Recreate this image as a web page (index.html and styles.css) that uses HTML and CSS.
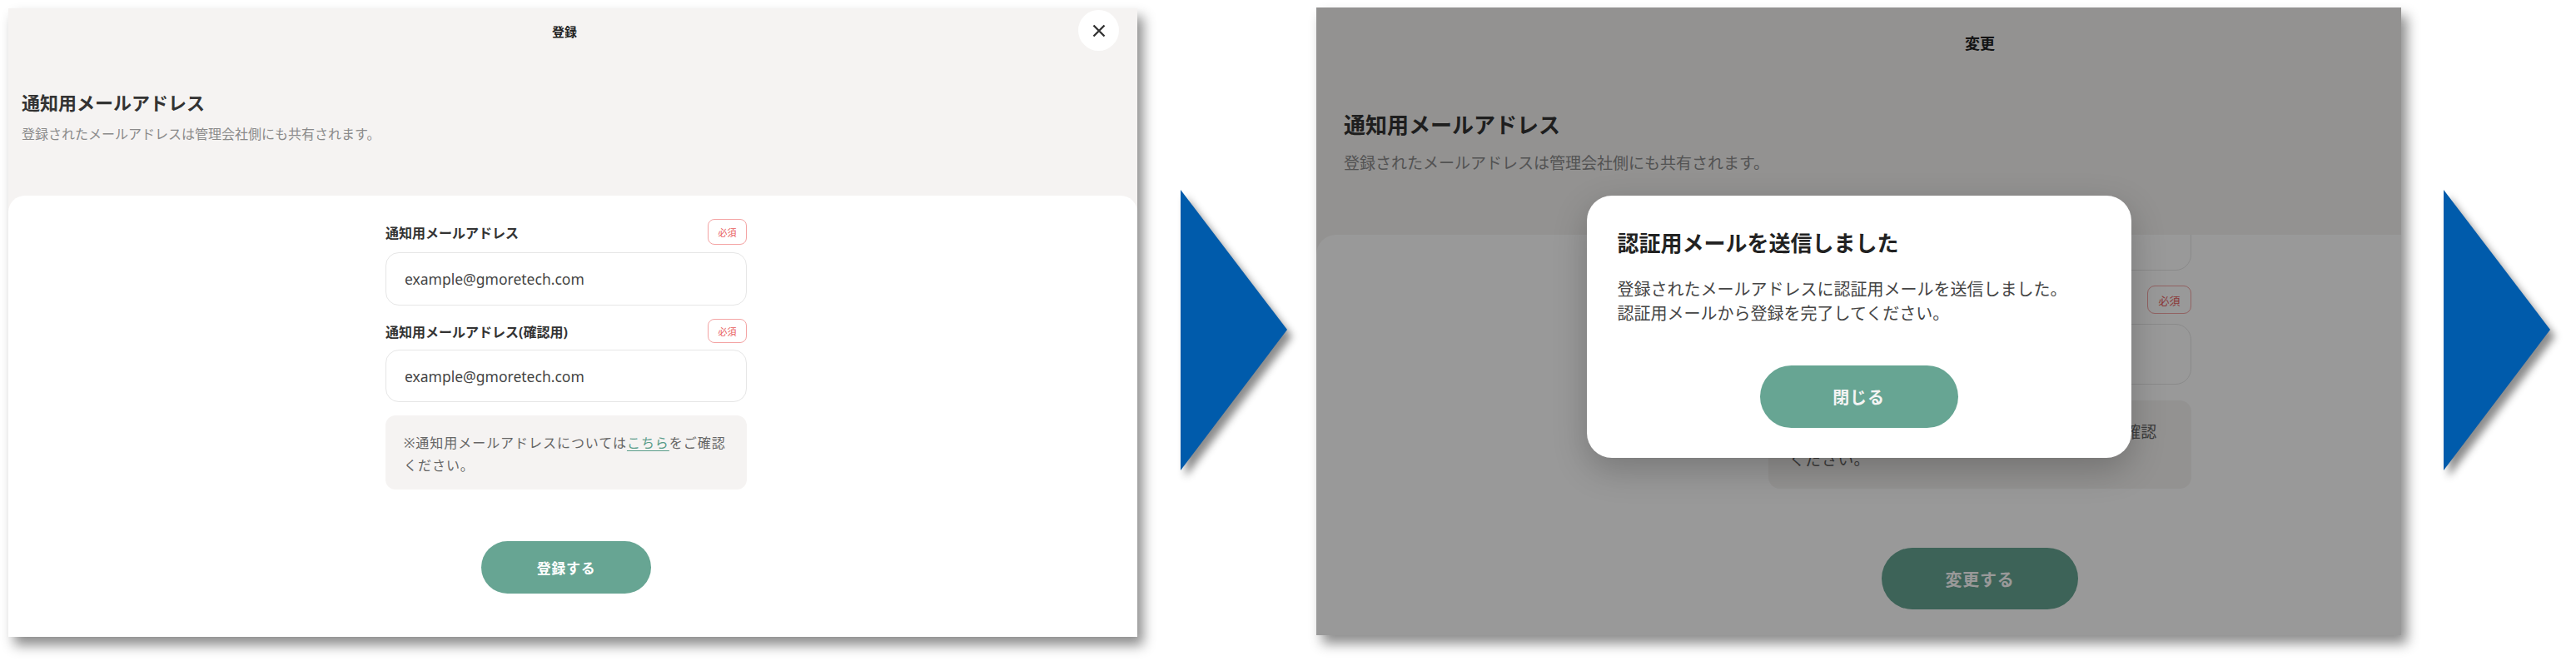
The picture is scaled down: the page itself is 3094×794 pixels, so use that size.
FILE: index.html
```html
<!DOCTYPE html>
<html lang="ja">
<head>
<meta charset="utf-8">
<title>通知用メールアドレス</title>
<link rel="stylesheet" href="styles.css">
</head>
<body>
<div class="stage">

  <!-- Step 1: registration form -->
  <section class="panel panel-a">
    <header class="head">
      <div class="head-title">登録</div>
      <button class="close" type="button" aria-label="閉じる">
        <svg width="18" height="18" viewBox="0 0 18 18"><path d="M2.5 2.5 L15.5 15.5 M15.5 2.5 L2.5 15.5" /></svg>
      </button>
      <h2 class="head-heading">通知用メールアドレス</h2>
      <p class="head-sub">登録されたメールアドレスは管理会社側にも共有されます。</p>
    </header>
    <div class="card">
      <div class="col">
        <div class="field-row"><span class="label">通知用メールアドレス</span><span class="req">必須</span></div>
        <div class="input">example@gmoretech.com</div>
        <div class="field-row row-2"><span class="label">通知用メールアドレス(確認用)</span><span class="req">必須</span></div>
        <div class="input input-2">example@gmoretech.com</div>
        <div class="note">※通知用メールアドレスについては<a href="#">こちら</a>をご確認<br>ください。</div>
        <button class="submit" type="button">登録する</button>
      </div>
    </div>
  </section>

  <svg class="arrow" viewBox="0 0 128 337" width="128" height="337"><polygon points="0,0 128,168 0,337" /></svg>

  <!-- Step 2: change form with confirmation dialog -->
  <section class="panel panel-b">
    <div class="page-b">
      <header class="head-b">
        <div class="head-b-title">変更</div>
        <h2 class="head-b-heading">通知用メールアドレス</h2>
        <p class="head-b-sub">登録されたメールアドレスは管理会社側にも共有されます。</p>
      </header>
      <div class="card-b">
        <div class="col-b">
          <div class="input-b first"></div>
          <div class="field-row-b"><span class="label-b">通知用メールアドレス(確認用)</span><span class="req-b">必須</span></div>
          <div class="input-b second">example@gmoretech.com</div>
          <div class="note-b">※通知用メールアドレスについては<a href="#">こちら</a>をご確認<br>ください。</div>
          <button class="submit-b" type="button">変更する</button>
        </div>
      </div>
    </div>
    <div class="overlay">
      <div class="dialog" role="dialog">
        <h3 class="dialog-title">認証用メールを送信しました</h3>
        <p class="dialog-body">登録されたメールアドレスに認証用メールを送信しました。<br>認証用メールから登録を完了してください。</p>
        <button class="dialog-btn" type="button">閉じる</button>
      </div>
    </div>
  </section>

  <svg class="arrow arrow-2" viewBox="0 0 128 337" width="128" height="337"><polygon points="0,0 128,168 0,337" /></svg>

</div>
</body>
</html>
```

FILE: styles.css
```css
* { box-sizing: border-box; }

html, body {
  margin: 0;
  padding: 0;
  background: #ffffff;
}

body {
  width: 3094px;
  height: 794px;
  overflow: hidden;
  font-family: "Noto Sans", "Noto Sans CJK JP", sans-serif;
  color: #333;
}

button {
  font-family: inherit;
  border: none;
  cursor: pointer;
}

.stage {
  display: flex;
  align-items: flex-start;
}

.panel {
  position: relative;
  overflow: hidden;
  background: #f5f3f2;
  box-shadow: 7px 10px 14px rgba(0, 0, 0, 0.45);
}

/* ---------- Step 1 ---------- */

.panel-a {
  margin: 10px 0 0 10px;
  width: 1356px;
  height: 755px;
  display: flex;
  flex-direction: column;
}

.head {
  height: 225px;
  flex: none;
}

.head-title {
  height: 56px;
  line-height: 56px;
  padding-right: 20px;
  text-align: center;
  font-size: 15px;
  font-weight: 700;
  color: #222;
}

.close {
  position: absolute;
  top: 2px;
  right: 22px;
  width: 49px;
  height: 49px;
  border-radius: 50%;
  background: #ffffff;
  display: flex;
  align-items: center;
  justify-content: center;
  padding: 0;
}

.close svg path {
  stroke: #333;
  stroke-width: 2.4;
  fill: none;
}

.head-heading {
  margin: 42px 0 0 16px;
  font-size: 22px;
  line-height: 30px;
  font-weight: 700;
  color: #333;
}

.head-sub {
  margin: 11px 0 0 16px;
  font-size: 16px;
  line-height: 24px;
  color: #8a8a8a;
}

.card {
  flex: 1;
  background: #ffffff;
  border-radius: 20px 20px 0 0;
  padding: 28px 16px 0 0;
}

.col {
  width: 434px;
  margin: 0 auto;
  display: flex;
  flex-direction: column;
}

.field-row {
  height: 31px;
  display: flex;
  align-items: center;
  justify-content: space-between;
}

.row-2 {
  margin-top: 16px;
  height: 29px;
}

.label {
  font-size: 16px;
  font-weight: 700;
  color: #333;
}

.req {
  height: 100%;
  width: 47px;
  border: 1.5px solid #f4a3a3;
  border-radius: 8px;
  color: #e85c5c;
  font-size: 11px;
  display: flex;
  align-items: center;
  justify-content: center;
}

.input {
  margin-top: 9px;
  height: 64px;
  border: 1px solid #e6e6e6;
  border-radius: 16px;
  padding-left: 22px;
  display: flex;
  align-items: center;
  font-size: 17.5px;
  color: #444;
}

.input-2 {
  margin-top: 8px;
  height: 63px;
}

.note {
  margin-top: 16px;
  height: 89px;
  background: #f5f3f2;
  border-radius: 12px;
  padding: 20px 10px 0 22px;
  font-size: 16px;
  line-height: 27px;
  letter-spacing: 0.06em;
  white-space: nowrap;
  color: #666;
}

.note a,
.note-b a {
  color: #5a9c89;
  text-decoration: underline;
  text-underline-offset: 3px;
}

.submit {
  margin: 62px auto 0;
  width: 204px;
  height: 63px;
  border-radius: 32px;
  background: #67a593;
  color: #ffffff;
  font-size: 17px;
  font-weight: 700;
  letter-spacing: 0.04em;
}

/* ---------- Arrows ---------- */

.arrow {
  flex: none;
  margin: 228px 0 0 52px;
  overflow: visible;
  filter: drop-shadow(6px 8px 5px rgba(0, 0, 0, 0.45));
}

.arrow polygon {
  fill: #005bab;
}

.arrow-2 {
  margin-left: 51px;
}

/* ---------- Step 2 ---------- */

.panel-b {
  margin: 9px 0 0 35px;
  width: 1303px;
  height: 754px;
  flex: none;
}

.page-b {
  width: 1594px;
  height: 100%;
  display: flex;
  flex-direction: column;
}

.head-b {
  height: 273px;
  flex: none;
}

.head-b-title {
  height: 86px;
  line-height: 86px;
  text-align: center;
  font-size: 18px;
  font-weight: 700;
  color: #222;
}

.head-b-heading {
  margin: 38px 0 0 33px;
  font-size: 26px;
  line-height: 34px;
  font-weight: 700;
  color: #333;
}

.head-b-sub {
  margin: 15px 0 0 33px;
  font-size: 19px;
  line-height: 28px;
  color: #8a8a8a;
}

.card-b {
  flex: 1;
  background: #ffffff;
  border-radius: 24px 24px 0 0;
  overflow: hidden;
}

.col-b {
  width: 508px;
  margin: 0 auto;
  display: flex;
  flex-direction: column;
}

.input-b {
  height: 75px;
  border: 1px solid #e6e6e6;
  border-radius: 19px;
  padding-left: 25px;
  display: flex;
  align-items: center;
  font-size: 20px;
  color: #444;
}

.input-b.first {
  margin-top: -32px;
}

.input-b.second {
  margin-top: 12px;
  height: 73px;
}

.field-row-b {
  margin-top: 18px;
  height: 34px;
  display: flex;
  align-items: center;
  justify-content: space-between;
}

.label-b {
  font-size: 19px;
  font-weight: 700;
}

.req-b {
  height: 100%;
  width: 53px;
  border: 1.5px solid #f4a3a3;
  border-radius: 9px;
  color: #e85c5c;
  font-size: 13px;
  display: flex;
  align-items: center;
  justify-content: center;
}

.note-b {
  margin-top: 19px;
  height: 106px;
  background: #f5f3f2;
  border-radius: 14px;
  padding: 22px 10px 0 25px;
  font-size: 19px;
  line-height: 33px;
  letter-spacing: 0.02em;
  white-space: nowrap;
  color: #666;
}

.submit-b {
  margin: 71px auto 0;
  width: 236px;
  height: 74px;
  border-radius: 37px;
  background: #67a593;
  color: #ffffff;
  font-size: 20px;
  font-weight: 700;
  letter-spacing: 0.04em;
}

.overlay {
  position: absolute;
  inset: 0;
  background: rgba(0, 0, 0, 0.4);
  display: flex;
  justify-content: center;
  align-items: flex-start;
  padding-top: 226px;
}

.dialog {
  width: 654px;
  height: 315px;
  background: #ffffff;
  border-radius: 30px;
  padding: 39px 37px 0;
  box-shadow: 0 14px 40px rgba(0, 0, 0, 0.22);
}

.dialog-title {
  margin: 0;
  font-size: 26px;
  line-height: 36px;
  font-weight: 700;
  color: #222;
}

.dialog-body {
  margin: 23px 0 0;
  font-size: 20px;
  line-height: 29px;
  color: #444;
}

.dialog-btn {
  display: block;
  margin: 48px auto 0;
  width: 238px;
  height: 75px;
  border-radius: 38px;
  background: #67a593;
  color: #f4f4f4;
  font-size: 20px;
  font-weight: 700;
  letter-spacing: 0.04em;
}
```
